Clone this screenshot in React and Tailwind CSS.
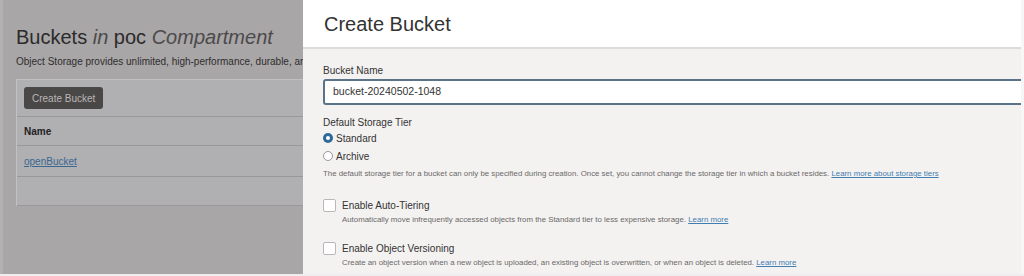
import React from "react";

const font = "font-['Liberation_Sans',Arial,sans-serif]";

function Radio({ checked, label }) {
  return (
    <label className="flex items-center gap-[3px] h-[18px] text-[10px] text-[#333]">
      {checked ? (
        <span className="w-[10px] h-[10px] rounded-full bg-[#2d6a9a] flex items-center justify-center">
          <span className="w-[4px] h-[4px] rounded-full bg-white" />
        </span>
      ) : (
        <span className="w-[10px] h-[10px] rounded-full border border-[#9a9898] bg-white" />
      )}
      {label}
    </label>
  );
}

function Check({ label, help }) {
  return (
    <div className="flex flex-col">
      <div className="flex items-center gap-[6px] h-[16px]">
        <span className="w-[13px] h-[13px] rounded-[2px] border border-[#b9b7b7] bg-white" />
        <span className="text-[10px] text-[#333]">{label}</span>
      </div>
      <p className="pl-[19px] mt-[2px] text-[7.85px] leading-[10px] text-[#6a6868]">
        {help}{" "}
        <a className="text-[#3f7db2] underline">Learn more</a>
      </p>
    </div>
  );
}

export default function App() {
  return (
    <div className={`flex w-[1024px] h-[276px] overflow-hidden border-b-2 border-[#efeded] ${font}`}>
      {/* Background page, dimmed */}
      <div className="w-[303px] shrink-0 bg-[#a9a6a7] border-l-[3px] border-[#b4b1b2] overflow-hidden">
        <div className="w-[600px] pl-[13px] pt-[25px]">
          <h1 className="w-[287px] text-[20px] leading-[24px] text-[#2c2a2b] whitespace-nowrap">
            Buckets <i className="text-[#4c4a4b]">in</i> poc{" "}
            <i className="text-[#4c4a4b]">Compartment</i>
          </h1>
          <p className="w-[287px] overflow-hidden mt-[6px] text-[10px] leading-[14px] text-[#2f2d2e] whitespace-nowrap">
            Object Storage provides unlimited, high-performance, durable, and secure data storage.
          </p>
          <div className="mt-[10px] bg-[#b0afb2] border-l border-t border-[#c2c0c2]">
            <div className="h-[37px] px-[7px] flex items-center border-b border-[#999798]">
              <button className="h-[22px] px-[8px] rounded-[3px] bg-[#4a4747] text-[10px] text-[#b9b6b6]">
                Create Bucket
              </button>
            </div>
            <div className="h-[29px] px-[7px] flex items-center border-b border-[#999798] text-[10px] font-bold text-[#222]">
              Name
            </div>
            <div className="h-[31px] px-[7px] flex items-center border-b border-[#999798] text-[10px]">
              <a className="text-[#3b6890] underline">openBucket</a>
            </div>
            <div className="h-[29px] border-b border-[#999798]" />
          </div>
        </div>
      </div>

      {/* Create Bucket panel */}
      <div className="w-[718px] shrink-0 flex flex-col bg-[#f4f2f1]">
        <div className="h-[49px] shrink-0 bg-white border-b-2 border-[#dcdada] px-[21px] pt-[12px]">
          <h2 className="text-[20px] leading-[24px] text-[#333]">Create Bucket</h2>
        </div>
        <div className="pl-[20px] pt-[16px] flex flex-col">
          <span className="text-[10px] leading-[12px] text-[#333]">Bucket Name</span>
          <div className="mt-[2px] h-[26px] -mr-[4px] bg-white border-2 border-[#5a7389] rounded-[3px] flex items-center px-[8px] text-[10.5px] text-[#333]">
            bucket-20240502-1048
          </div>
          <span className="mt-[12px] text-[10px] leading-[12px] text-[#333]">Default Storage Tier</span>
          <Radio checked label="Standard" />
          <Radio label="Archive" />
          <p className="mt-[4px] text-[7.85px] leading-[10px] text-[#6a6868]">
            The default storage tier for a bucket can only be specified during creation. Once set, you cannot change the storage tier in which a bucket resides.{" "}
            <a className="text-[#3f7db2] underline">Learn more about storage tiers</a>
          </p>
          <div className="mt-[18px] flex flex-col gap-[15px]">
            <Check
              label="Enable Auto-Tiering"
              help="Automatically move infrequently accessed objects from the Standard tier to less expensive storage."
            />
            <Check
              label="Enable Object Versioning"
              help="Create an object version when a new object is uploaded, an existing object is overwritten, or when an object is deleted."
            />
          </div>
        </div>
      </div>
      <div className="flex-1 bg-[#f8f6f6]" />
    </div>
  );
}
